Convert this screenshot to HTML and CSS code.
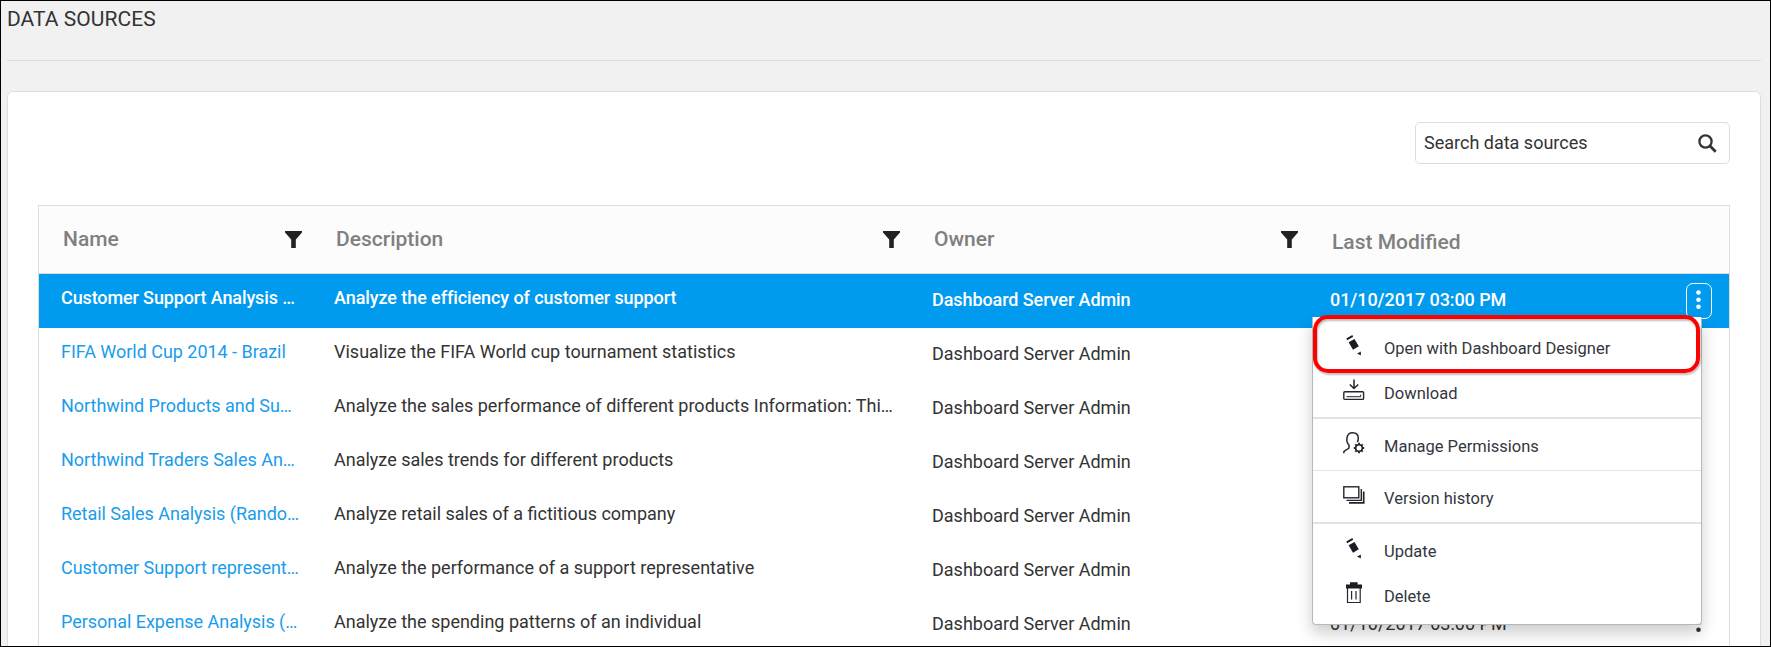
FILE: index.html
```html
<!DOCTYPE html>
<html lang="en">
<head>
<meta charset="utf-8">
<title>Data Sources</title>
<link rel="stylesheet" href="styles.css">
</head>
<body>
<svg class="defs" width="0" height="0">
  <symbol id="funnel" viewBox="0 0 17 17"><path d="M0 0h17v1.500L10.800 8.400V17H6.200V8.400L0 1.500z"/></symbol>
  <symbol id="dots" viewBox="0 0 5 20"><circle cx="2.500" cy="2.500" r="2.300"/><circle cx="2.500" cy="9.700" r="2.300"/><circle cx="2.500" cy="16.800" r="2.300"/></symbol>
  <symbol id="pencil" viewBox="0 0 22 22"><path d="M3.300 4.500 9.300 1 10.200 2.700 4.200 6.200zM5.600 8.200 11.500 5 15.800 12.200 10 15.700zM14 19.800 17.700 17.400 18 21.200z"/></symbol>
</svg>
<div class="page">
  <header class="head"><h1 class="title">DATA SOURCES</h1></header>
  <main class="panel">
    <div class="toolbar">
      <div class="search"><span class="search-text">Search data sources</span>
        <svg class="search-icon" width="19" height="19" viewBox="0 0 19 19"><circle cx="7.500" cy="7.500" r="6.100" fill="none" stroke="#333" stroke-width="2.300"/><path d="M11.800 11.800 17.700 17.700" stroke="#333" stroke-width="2.800"/></svg>
      </div>
    </div>
    <div class="grid">
      <div class="row grid-head">
        <div class="cell"><span class="label">Name</span><svg class="funnel"><use href="#funnel"/></svg></div>
        <div class="cell"><span class="label">Description</span><svg class="funnel"><use href="#funnel"/></svg></div>
        <div class="cell"><span class="label">Owner</span><svg class="funnel"><use href="#funnel"/></svg></div>
        <div class="cell low"><span>Last Modified</span></div>
      </div>
      <div class="row selected">
        <div class="cell name"><span>Customer Support Analysis …</span></div>
        <div class="cell"><span>Analyze the efficiency of customer support</span></div>
        <div class="cell low"><span>Dashboard Server Admin</span></div>
        <div class="cell low"><span>01/10/2017 03:00 PM</span><span class="more boxed"><svg class="dots"><use href="#dots"/></svg></span></div>
      </div>
      <div class="row">
        <div class="cell name"><span>FIFA World Cup 2014 - Brazil</span></div>
        <div class="cell"><span>Visualize the FIFA World cup tournament statistics</span></div>
        <div class="cell low"><span>Dashboard Server Admin</span></div>
        <div class="cell low"></div>
      </div>
      <div class="row">
        <div class="cell name"><span>Northwind Products and Su…</span></div>
        <div class="cell"><span>Analyze the sales performance of different products Information: Thi…</span></div>
        <div class="cell low"><span>Dashboard Server Admin</span></div>
        <div class="cell low"></div>
      </div>
      <div class="row">
        <div class="cell name"><span>Northwind Traders Sales An…</span></div>
        <div class="cell"><span>Analyze sales trends for different products</span></div>
        <div class="cell low"><span>Dashboard Server Admin</span></div>
        <div class="cell low"></div>
      </div>
      <div class="row">
        <div class="cell name"><span>Retail Sales Analysis (Rando…</span></div>
        <div class="cell"><span>Analyze retail sales of a fictitious company</span></div>
        <div class="cell low"><span>Dashboard Server Admin</span></div>
        <div class="cell low"></div>
      </div>
      <div class="row">
        <div class="cell name"><span>Customer Support represent…</span></div>
        <div class="cell"><span>Analyze the performance of a support representative</span></div>
        <div class="cell low"><span>Dashboard Server Admin</span></div>
        <div class="cell low"></div>
      </div>
      <div class="row">
        <div class="cell name"><span>Personal Expense Analysis (…</span></div>
        <div class="cell"><span>Analyze the spending patterns of an individual</span></div>
        <div class="cell low"><span>Dashboard Server Admin</span></div>
        <div class="cell low"><span>01/10/2017 03:00 PM</span><span class="more"><svg class="dots"><use href="#dots"/></svg></span></div>
      </div>
    </div>
  </main>
  <div class="menu">
    <div class="item open"><svg class="icon"><use href="#pencil"/></svg><span>Open with Dashboard Designer</span></div>
    <div class="item download"><svg class="icon line" viewBox="0 0 22 22"><path d="M11 .500v8.500M6.800 5.500 11 9.500l4.200-4" stroke-width="1.500"/><rect x=".8" y="12.800" width="19.800" height="7.600" rx="1" stroke-width="1.400"/><path d="M3.500 17.700h14.200v-2" stroke-width="1"/></svg><span>Download</span></div>
    <div class="item permissions"><svg class="icon line" viewBox="0 0 22 22"><path d="M.8 21.200V20c1.500-2.500 4-2.200 5.200-4.200V13C4.300 11.300 3.500 8.600 4 5.800 4.500 2.300 6.500.8 9.600.8c3.600 0 5.700 2.200 5.700 5.500 0 1.500-.3 2.700-1 3.700" stroke-width="1.500"/><circle cx="16" cy="16" r="3.300" stroke-width="1.600"/><path d="M16 10.800v2M16 19.200v2M10.800 16h2M19.200 16h2M12.300 12.300l1.400 1.400M18.300 18.300l1.400 1.400M12.300 19.700l1.400-1.400M18.300 13.700l1.400-1.400" stroke-width="1.900"/></svg><span>Manage Permissions</span></div>
    <div class="item history"><svg class="icon line" viewBox="0 0 22 22"><rect x=".8" y="2.800" width="15" height="11" stroke-width="1.400"/><path d="M18.300 5v11.400H3.500" stroke-width="1.400"/><path d="M20.700 7.500v11.300H6" stroke-width="1.700"/></svg><span>Version history</span></div>
    <div class="item update"><svg class="icon"><use href="#pencil"/></svg><span>Update</span></div>
    <div class="item delete"><svg class="icon" viewBox="0 0 22 22"><path d="M7 .2h7.600v2.400h4.400v3.800H3V2.600h4z"/><path class="line" d="M4.500 6v14.500h12.700V6M8.600 9v8.500M13 9v8.500" stroke-width="1.200"/></svg><span>Delete</span></div>
    <div class="highlight"></div>
  </div>
</div>
</body>
</html>
```
FILE: styles.css
```css
* { box-sizing: border-box; }
body { margin: 0; font-family: Roboto, "Liberation Sans", sans-serif; color: #333; }
.defs { position: absolute; }
.page {
  position: relative;
  height: 647px;
  overflow: hidden;
  border: 1px solid #000;
  background: #f1f1f1;
  padding: 0 9px 0 6px;
}
.head { height: 60px; border-bottom: 1px solid #ddd; }
.title { margin: 0; padding-top: 6px; font-size: 21px; font-weight: 400; line-height: 24px; letter-spacing: 0.05px; }
.panel {
  height: 700px;
  margin-top: 30px;
  padding: 30px 30px 0;
  background: #fff;
  border: 1px solid #dcdfe2;
  border-radius: 6px;
}
.toolbar { display: flex; justify-content: flex-end; height: 83px; }
.search {
  display: flex;
  align-items: center;
  justify-content: space-between;
  width: 315px;
  height: 42px;
  padding: 0 12px 0 8px;
  border: 1px solid #ddd;
  border-radius: 5px;
  font-size: 18px;
}
.search-text { padding-bottom: 2px; }
.grid { border: 1px solid #ddd; height: 600px; }
.row { display: grid; grid-template-columns: 273px 598px 398px 1fr; height: 54px; font-size: 18px; }
.cell {
  display: flex;
  align-items: center;
  justify-content: space-between;
  padding: 0 10px 8px 22px;
  white-space: nowrap;
}
.low { padding-bottom: 4px; }
.name { color: #1a9cec; letter-spacing: -0.03px; }
.grid-head {
  height: 68px;
  background: #fcfcfc;
  border-bottom: 1px solid #ddd;
  font-size: 21px;
  font-weight: 500;
  color: #808080;
}
.grid-head .cell { padding: 0 10px 0 24px; }
.grid-head .low { padding-top: 5px; }
.label { padding-bottom: 2px; }
.funnel { width: 17px; height: 17px; fill: #222; }
.selected { background: #009aef; color: #fff; font-weight: 500; letter-spacing: -0.08px; }
.selected .name { color: #fff; letter-spacing: -0.12px; }
.more { display: flex; justify-content: center; width: 26px; height: 36px; margin: 3px 7px 0 0; padding: 6px 1px 0 0; }
.boxed { border: 1px solid #fff; border-radius: 7px; }
.dots { width: 5px; height: 20px; fill: currentColor; }
.menu {
  position: absolute;
  left: 1311px;
  top: 316px;
  width: 390px;
  height: 308px;
  background: #fff;
  border: 1px solid #b8b8b8;
  border-top: 0;
  border-radius: 0 0 4px 4px;
  box-shadow: 0 8px 16px rgba(0, 0, 0, .2);
  font-size: 16.5px;
  color: #34363e;
}
.item { display: flex; align-items: center; gap: 19px; padding-left: 30px; }
.icon { flex: none; width: 22px; height: 22px; margin-top: -6px; fill: #1b1d25; }
.line { fill: none; stroke: #24262e; }
.open { height: 62px; }
.download { height: 40px; padding-bottom: 9px; border-bottom: 2px solid #e3e3e3; }
.permissions { height: 52px; padding-top: 4px; border-bottom: 1px solid #e3e3e3; }
.history { height: 53px; padding-top: 4px; border-bottom: 2px solid #e3e3e3; }
.download .icon, .permissions .icon, .history .icon { margin-top: -8px; }
.update { height: 54px; }
.delete { height: 38px; padding-bottom: 2px; }
.highlight {
  position: absolute;
  left: 0;
  top: -2px;
  width: 387px;
  height: 58px;
  border: 4px solid #f00;
  border-radius: 15px;
  box-shadow: 1px 2px 2px rgba(0, 0, 0, .25), inset 1px 2px 2px rgba(0, 0, 0, .25);
}
```
